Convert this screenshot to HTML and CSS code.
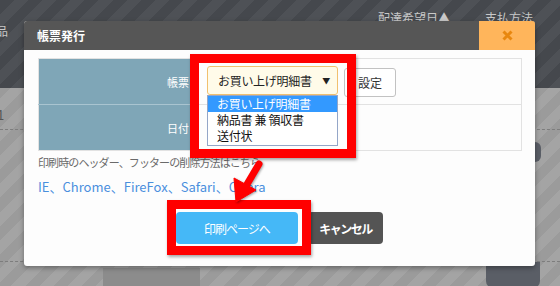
FILE: index.html
```html
<html>
    <head>
        <meta charset="UTF-8">
        <link rel="stylesheet" href="styles.css">
    </head>
    <body>
        <div class="page">
            <div class="topbar">
                <span class="tb-left">品</span>
                <span class="tb-col">配達希望日▲</span>
                <span class="tb-col tb-last">支払方法</span>
            </div>
            <div class="list-row row-a">
                <span class="num">1</span>
            </div>
            <div class="list-row row-b">
                <span class="bg-btn"></span>
            </div>
            <div class="row-c">
                <span class="bg-text"></span>
                <span class="bg-btn2"></span>
            </div>
        </div>

        <div class="overlay">
            <div class="modal">
                <div class="modal-head">
                    <h1>帳票発行</h1>
                    <div class="close">
                        <svg width="11" height="11" viewBox="0 0 11 11"><path d="M1.5 1.5 L9.5 9.5 M9.5 1.5 L1.5 9.5" stroke="#e8870f" stroke-width="3"/></svg>
                    </div>
                </div>
                <div class="modal-body">
                    <table class="form-table">
                        <tr>
                            <th>帳票</th>
                            <td>
                                <div class="field">
                                    <div class="select">お買い上げ明細書<span class="caret">▼</span></div>
                                    <ul class="options">
                                        <li class="on">お買い上げ明細書</li>
                                        <li>納品書 兼 領収書</li>
                                        <li>送付状</li>
                                    </ul>
                                    <button class="set-btn">設定</button>
                                </div>
                            </td>
                        </tr>
                        <tr>
                            <th>日付</th>
                            <td></td>
                        </tr>
                    </table>
                    <p class="note">印刷時のヘッダー、フッターの削除方法はこちら</p>
                    <p class="links"><a>IE</a>、<a>Chrome</a>、<a>FireFox</a>、<a>Safari</a>、<a>Opera</a></p>
                    <div class="actions">
                        <button class="btn-print">印刷ページへ</button>
                        <button class="btn-cancel">キャンセル</button>
                    </div>
                </div>
            </div>
            <div class="mark mark-select"></div>
            <div class="mark mark-button"></div>
            <svg class="arrow" width="560" height="286" viewBox="0 0 560 286">
                <g fill="#f00" stroke="#f00" filter="drop-shadow(1px 1px 1px rgba(0,0,0,0.35))">
                    <line x1="259" y1="164" x2="246" y2="186" stroke-width="7" stroke-linecap="round"/>
                    <polygon points="236,202 256,190 234,178" stroke-width="1" stroke-linejoin="round"/>
                </g>
            </svg>
        </div>
    </body>
</html>
```

FILE: styles.css
```css
body {
    margin: 0;
    width: 560px;
    height: 286px;
    overflow: hidden;
    position: relative;
    font-family: "Noto Sans CJK JP", "Noto Sans", sans-serif;
}

/* dimmed page behind the dialog */
.page {
    height: 286px;
    background: repeating-linear-gradient(135deg, #9b9b9b 0 10px, #a4a4a4 10px 20px);
}
.topbar {
    height: 88px;
    display: flex;
    align-items: flex-start;
    background: repeating-linear-gradient(135deg, #45484d 0 10px, #4e5156 10px 20px);
    color: #c8c8c8;
    font-size: 12px;
}
.tb-left {
    margin: 22px 0 0 -4px;
    flex: 1;
}
.tb-col {
    margin-top: 9px;
    margin-right: 35px;
}
.tb-last {
    margin-right: 27px;
}
.list-row {
    border-bottom: 1px dashed #7d7d7d;
}
.row-a {
    height: 41px;
    font-size: 13px;
    color: #555;
}
.num {
    display: inline-block;
    margin: 17px 0 0 -3px;
}
.row-b {
    height: 131px;
    display: flex;
    justify-content: flex-end;
}
.bg-btn {
    width: 50px;
    height: 20px;
    margin: 12px 19px 0 0;
    background: #5a5e66;
    border-radius: 6px;
}
.row-c {
    display: flex;
    justify-content: space-between;
}
.bg-text {
    width: 97px;
    height: 18px;
    margin: 6px 0 0 103px;
    background: #8c8c8c;
}
.bg-btn2 {
    width: 54px;
    height: 26px;
    margin-right: 20px;
    background: #5a5e66;
    border-radius: 0 0 7px 7px;
}

/* dialog */
.overlay {
    position: absolute;
    left: 0;
    top: 0;
    width: 560px;
    height: 286px;
}
.modal {
    margin: 21px 0 0 24px;
    width: 511px;
    height: 245px;
    background: #fdfdfd;
    border-radius: 3px;
    box-shadow: 0 2px 5px rgba(0, 0, 0, 0.35);
    overflow: hidden;
}
.modal-head {
    display: flex;
    height: 29px;
    background: #565656;
}
.modal-head h1 {
    flex: 1;
    margin: 0;
    padding-left: 13px;
    font-size: 12px;
    line-height: 29px;
    color: #fff;
}
.close {
    width: 56px;
    display: flex;
    align-items: center;
    justify-content: center;
    background: #ffb55b;
}
.modal-body {
    padding: 8px 13px 0 14px;
}
.form-table {
    width: 484px;
    border-collapse: collapse;
    border: 1px solid #e2e2e2;
}
.form-table tr {
    height: 46px;
}
.form-table th {
    width: 150px;
    padding: 0 8px 0 0;
    background: #7fa6b7;
    border-bottom: 1px solid #a9c4d0;
    color: #fff;
    font-size: 11px;
    font-weight: normal;
    text-align: right;
}
.form-table tr:last-child th {
    border-bottom: 0;
}
.form-table td {
    padding: 0 0 0 10px;
    border-bottom: 1px solid #e2e2e2;
    vertical-align: top;
}
.field {
    position: relative;
    display: flex;
    align-items: flex-start;
    padding-top: 7px;
}
.select {
    box-sizing: border-box;
    width: 131px;
    height: 29px;
    display: flex;
    align-items: center;
    justify-content: space-between;
    padding: 0 7px 0 10px;
    background: #fffbe9;
    border: 1px solid #f1c06f;
    border-radius: 3px;
    font-size: 12px;
    letter-spacing: -0.3px;
    color: #222;
}
.caret {
    font-size: 8px;
}
.options {
    position: absolute;
    left: 0;
    top: 36px;
    width: 131px;
    height: 51px;
    box-sizing: border-box;
    margin: 0;
    padding: 0;
    list-style: none;
    background: #fff;
    border: 1px solid #94a6c8;
    font-size: 12px;
    line-height: 16px;
    letter-spacing: -0.3px;
    color: #111;
}
.options li {
    padding-left: 9px;
}
.options .on {
    background: #3399ff;
    color: #fff;
}
.set-btn {
    box-sizing: border-box;
    width: 52px;
    height: 29px;
    margin: 2px 0 0 6px;
    padding: 0;
    background: #fff;
    border: 1px solid #c2c2c2;
    border-radius: 3px;
    font-family: inherit;
    font-size: 12px;
    color: #333;
}
.note {
    margin: 2px 0 0 0;
    font-size: 11px;
    line-height: 18px;
    letter-spacing: -0.9px;
    color: #6a6a6a;
}
.links {
    margin: 7px 0 0 0;
    font-size: 13px;
    line-height: 18px;
    color: #4a8fdd;
}
.actions {
    display: flex;
    justify-content: center;
    gap: 10px;
    margin-top: 16px;
    padding-right: 1px;
}
.actions button {
    height: 32px;
    padding: 0;
    border: 0;
    border-radius: 4px;
    font-family: inherit;
    font-size: 12px;
    white-space: nowrap;
    color: #fff;
}
.btn-print {
    width: 122px;
    background: #45b8f7;
    letter-spacing: -1px;
}
.btn-cancel {
    width: 75px;
    padding-left: 2px;
    background: #545454;
    font-weight: bold;
    letter-spacing: -1.5px;
}

/* red annotations */
.mark {
    position: absolute;
    box-sizing: border-box;
    border: 9px solid #f00;
    box-shadow: 1px 2px 3px rgba(0, 0, 0, 0.35);
}
.mark-select {
    left: 190px;
    top: 54px;
    width: 166px;
    height: 104px;
}
.mark-button {
    left: 167px;
    top: 200px;
    width: 144px;
    height: 55px;
}
.arrow {
    position: absolute;
    left: 0;
    top: 0;
}
```
